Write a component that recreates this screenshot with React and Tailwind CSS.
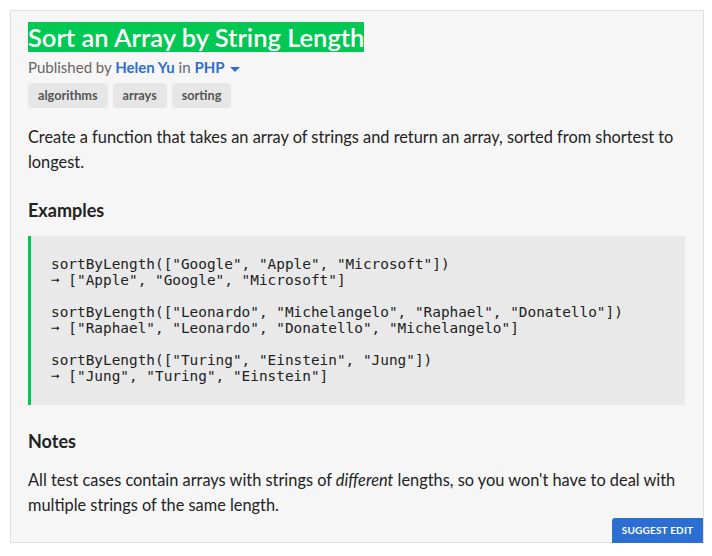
import React from "react";

const TAGS = ["algorithms", "arrays", "sorting"];

const CODE = `sortByLength(["Google", "Apple", "Microsoft"])
➞ ["Apple", "Google", "Microsoft"]

sortByLength(["Leonardo", "Michelangelo", "Raphael", "Donatello"])
➞ ["Raphael", "Leonardo", "Donatello", "Michelangelo"]

sortByLength(["Turing", "Einstein", "Jung"])
➞ ["Jung", "Turing", "Einstein"]`;

export default function App() {
  return (
    <div className="w-[712px] h-[556px] bg-white pt-[10px] pl-[10px] font-['Lato',sans-serif]">
      <div className="relative w-[694px] h-[533px] bg-[#f6f6f6] border border-[#e0e0e0] pl-[17px] pr-[18px] pt-[11px]">
        <h1 className="leading-[30px]">
          <span className="bg-[#00c853] text-white text-[25.5px] font-semibold">Sort an Array by String Length</span>
        </h1>
        <div className="text-[15px] text-[#666] leading-[20px] mt-[1px]">
          Published by <span className="text-[#2f6fd0] font-bold">Helen Yu</span> in{" "}
          <span className="text-[#2f6fd0] font-bold">PHP</span>
          <span className="inline-block ml-[5px] align-middle w-0 h-0 border-l-[5px] border-r-[5px] border-t-[5px] border-l-transparent border-r-transparent border-t-[#2f6fd0]" />
        </div>
        <div className="flex gap-[5px] mt-[6px]">
          {TAGS.map((t) => (
            <span key={t} className="h-[25px] px-[10px] flex items-center rounded-[4px] bg-[#e6e6e6] text-[12.7px] font-bold text-[#555]">
              {t}
            </span>
          ))}
        </div>
        <p className="text-[16.35px] text-[#222] leading-[25px] mt-[16px]">
          Create a function that takes an array of strings and return an array, sorted from shortest to longest.
        </p>
        <h2 className="text-[18px] font-bold text-[#222] mt-[24px] leading-[24px]">Examples</h2>
        <pre className="mt-[14px] bg-[#e9e9e9] border-l-[3px] border-[#00c853] pl-[20px] pt-[20px] pb-[21px] text-[14.4px] leading-[16px] text-[#222] font-['DejaVu_Sans_Mono',monospace]">
          {CODE}
        </pre>
        <h2 className="text-[18px] font-bold text-[#222] mt-[24px] leading-[24px]">Notes</h2>
        <p className="text-[16.35px] text-[#222] leading-[25px] mt-[14px]">
          All test cases contain arrays with strings of <em>different</em> lengths, so you won't have to deal with multiple strings of the same length.
        </p>
        <button className="absolute right-[0px] bottom-[-1px] w-[91px] h-[25px] bg-[#2c6fd3] rounded-tl-[3px] text-white text-[10px] font-bold tracking-[0.2px]">
          SUGGEST EDIT
        </button>
      </div>
    </div>
  );
}
